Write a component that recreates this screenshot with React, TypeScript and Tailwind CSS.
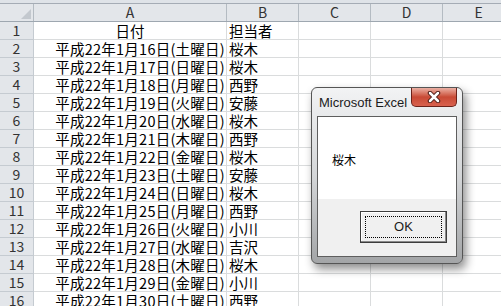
import React from 'react';

const rows: [string, string][] = [
  ['日付', '担当者'],
  ['平成22年1月16日(土曜日)', '桜木'],
  ['平成22年1月17日(日曜日)', '桜木'],
  ['平成22年1月18日(月曜日)', '西野'],
  ['平成22年1月19日(火曜日)', '安藤'],
  ['平成22年1月20日(水曜日)', '桜木'],
  ['平成22年1月21日(木曜日)', '西野'],
  ['平成22年1月22日(金曜日)', '桜木'],
  ['平成22年1月23日(土曜日)', '安藤'],
  ['平成22年1月24日(日曜日)', '桜木'],
  ['平成22年1月25日(月曜日)', '西野'],
  ['平成22年1月26日(火曜日)', '小川'],
  ['平成22年1月27日(水曜日)', '吉沢'],
  ['平成22年1月28日(木曜日)', '桜木'],
  ['平成22年1月29日(金曜日)', '小川'],
  ['平成22年1月30日(土曜日)', '西野'],
];

function App() {
  return (
    <div className="relative w-[501px] h-[306px] overflow-hidden bg-white font-['Noto_Sans_CJK_JP',sans-serif] text-black">
      {/* top strip */}
      <div className="h-[4px] bg-[#dfe3e8] border-b border-[#a5acb5]" />

      {/* column headers */}
      <div className="flex h-[18px] bg-[#e3e6ea] border-b border-[#9ea7b0] text-[14px] text-[#333] leading-[17px]">
        <div className="relative w-[34px] shrink-0 border-r border-[#b4bbc2]">
          <svg className="absolute right-[2px] bottom-[2px]" width="10" height="10" viewBox="0 0 10 10">
            <polygon points="10,0 10,10 0,10" fill="#c3c8ce" />
          </svg>
        </div>
        {[
          ['A', 'w-[193px]'],
          ['B', 'w-[72px]'],
          ['C', 'w-[72px]'],
          ['D', 'w-[72px]'],
          ['E', 'w-[72px]'],
        ].map(([l, w]) => (
          <div key={l} className={`${w} shrink-0 flex items-center justify-center border-r border-[#b4bbc2]`}>
            {l}
          </div>
        ))}
        <div className="flex-1" />
      </div>

      {/* rows */}
      {rows.map(([a, b], i) => (
        <div key={i} className="flex h-[18px] text-[14.5px] leading-[17px]">
          <div className="w-[34px] shrink-0 flex items-center justify-center bg-[#e3e6ea] border-r border-[#9ea7b0] border-b border-[#c5cbd1] text-[14px] text-[#333]">
            {i + 1}
          </div>
          <div
            className={`w-[193px] shrink-0 flex items-center border-r border-b border-[#dadcdd] whitespace-nowrap ${
              i === 0 ? 'justify-center' : 'justify-end pr-[1px] tracking-[0.25px]'
            }`}
          >
            {a}
          </div>
          <div className="w-[72px] shrink-0 flex items-center pl-[2px] border-r border-b border-[#dadcdd] whitespace-nowrap">
            {b}
          </div>
          <div className="w-[72px] shrink-0 border-r border-b border-[#dadcdd]" />
          <div className="w-[72px] shrink-0 border-r border-b border-[#dadcdd]" />
          <div className="w-[72px] shrink-0 border-r border-b border-[#dadcdd]" />
          <div className="flex-1 border-b border-[#dadcdd]" />
        </div>
      ))}

      {/* message box */}
      <div className="absolute left-[311px] top-[87px] w-[152px] h-[177px] rounded-[6px] border border-[#555] bg-gradient-to-b from-[#f2f3f4] via-[#d4d6d8] to-[#a3a5a7] shadow-[3px_5px_10px_rgba(0,0,0,0.45)] flex flex-col px-[5px] pb-[6px]">
        <div className="relative h-[28px] shrink-0">
          <span className="absolute left-[2px] top-[5px] font-['Liberation_Sans',sans-serif] text-[13px] text-[#1b1b1b]">
            Microsoft Excel
          </span>
          <div className="absolute right-[0px] top-0 w-[46px] h-[19px] rounded-b-[5px] border border-t-0 border-[#6b2219] bg-gradient-to-b from-[#eab0a4] via-[#c84a35] to-[#d9614e] flex items-center justify-center">
            <svg width="14" height="12" viewBox="0 0 14 12">
              <path d="M3 2 L11 10 M11 2 L3 10" stroke="#4a1a14" strokeWidth="4.5" strokeLinecap="round" />
              <path d="M3 2 L11 10 M11 2 L3 10" stroke="#ffffff" strokeWidth="2.5" strokeLinecap="round" />
            </svg>
          </div>
        </div>
        <div className="flex-1 flex flex-col border border-[#5e5e5e] bg-[#f0f0f0]">
          <div className="h-[82px] bg-white flex items-center pl-[14px] pt-[4px] text-[12px]">
            桜木
          </div>
          <div className="flex-1 flex items-start justify-end pt-[12px] pr-[9px]">
            <div className="w-[87px] h-[32px] border border-[#3c3c3c] shadow-[inset_-1px_-1px_0_#8a8a8a,inset_1px_1px_0_#ffffff] bg-[#f0f0f0] p-[4px]">
              <div className="w-full h-full border border-dotted border-black flex items-center justify-center font-['Liberation_Sans',sans-serif] text-[13px] text-[#1b1b1b]">
                OK
              </div>
            </div>
          </div>
        </div>
      </div>
    </div>
  );
}

export default App;
